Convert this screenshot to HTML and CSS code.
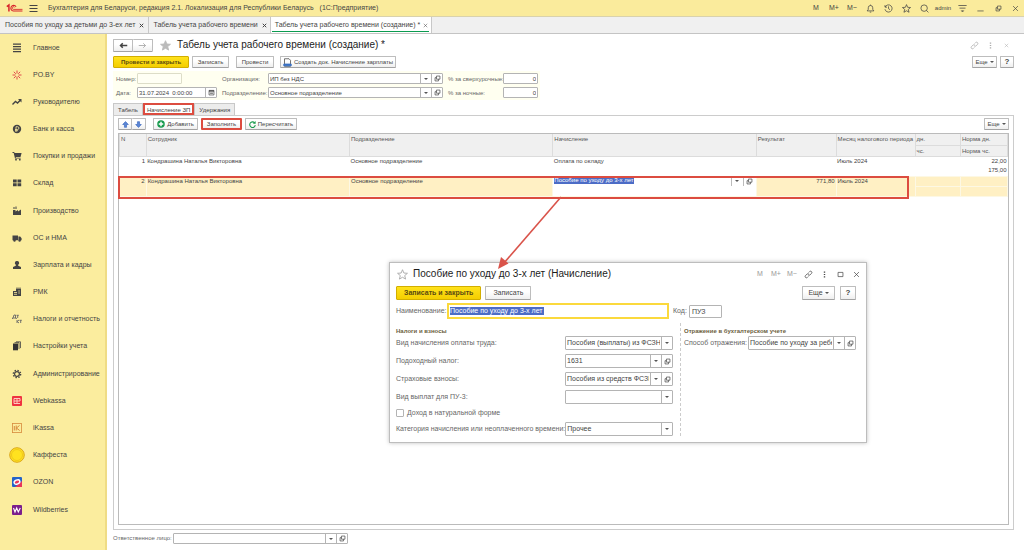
FILE: index.html
```html
<!DOCTYPE html>
<html lang="ru">
<head>
<meta charset="utf-8">
<title>Табель учета рабочего времени</title>
<link rel="stylesheet" href="styles.css">
</head>
<body>
<svg class="defs" aria-hidden="true">
  <symbol id="star" viewBox="0 0 12 12"><path d="M6 .8l1.500 3.600 3.900.3-3 2.500 1 3.800L6 9l-3.400 2 1-3.800-3-2.500 3.900-.3z"/></symbol>
  <symbol id="open" viewBox="0 0 10 10"><path d="M3.500 1.500h5v4.500h-5zM3.500 3.800h-2v4.700h5V6"/></symbol>
  <symbol id="link" viewBox="0 0 12 12"><path d="M6.200 3.400l1.500-1.500a1.800 1.800 0 0 1 2.500 2.500L8 6.500a1.800 1.800 0 0 1-2.500 0M5.800 8.600l-1.500 1.500a1.800 1.800 0 0 1-2.500-2.500L4 5.500a1.800 1.800 0 0 1 2.500 0"/></symbol>
  <symbol id="close" viewBox="0 0 10 10"><path d="M1.500 1.500l7 7M8.500 1.500l-7 7"/></symbol>
  <symbol id="dots" viewBox="0 0 10 10"><path d="M5 .8v1.600M5 4.200v1.600M5 7.600v1.600"/></symbol>
</svg>

<header class="titlebar">
  <svg class="logo" viewBox="0 0 32 18"><path d="M1.500 6.500l4-3v12" stroke-width="2.800"/><path d="M19 6.500A5.400 5.400 0 1 0 14 14.800h17" stroke-width="2"/><path d="M16.300 8a2.500 2.500 0 1 0-2.300 3.600h17" stroke-width="1.600"/></svg>
  <button class="plain" aria-label="Меню"><svg class="ic9" viewBox="0 0 9 9"><path d="M.5 1.500h8M.5 4.500h8M.5 7.500h8"/></svg></button>
  <span class="app-name">Бухгалтерия для Беларуси, редакция 2.1. Локализация для Республики Беларусь</span>
  <span>(1С:Предприятие)</span>
  <nav class="tools" aria-label="Система">
    <button>M</button><button>M+</button><button>M−</button>
    <button aria-label="Уведомления"><svg class="ic9" viewBox="0 0 12 12"><path d="M1.500 9.200h9L9 7.200V5a3 3 0 0 0-6 0v2.200zM5 10.800h2M6 2V.8"/></svg></button>
    <button aria-label="История"><svg class="ic9" viewBox="0 0 12 12"><path d="M1.600 4A4.800 4.800 0 1 1 1.300 7M1.300 1.500V4.200H4M6 3.200V6.200l2 1.300"/></svg></button>
    <button aria-label="Избранное"><svg class="ic9"><use href="#star"/></svg></button>
    <button aria-label="Поиск"><svg class="ic9" viewBox="0 0 12 12"><circle cx="5.500" cy="5.500" r="4.300"/><path d="M8.600 8.600l2.600 2.600"/></svg></button>
    <button class="user">admin</button>
    <button aria-label="Настройки"><svg class="ic9" viewBox="0 0 12 12"><path d="M.5 2h11M2 5.500h8M4.500 9h3L6 10.500z"/></svg></button>
    <button aria-label="Свернуть"><svg class="ic7" viewBox="0 0 10 10"><path d="M.5 8.500h9"/></svg></button>
    <button aria-label="Восстановить"><svg class="ic7"><use href="#open"/></svg></button>
    <button class="last" aria-label="Закрыть"><svg class="ic7"><use href="#close"/></svg></button>
  </nav>
</header>

<nav class="windows" aria-label="Открытые окна">
  <div class="win"><a href="#">Пособия по уходу за детьми до 3-ех лет</a><button class="x" aria-label="Закрыть"><svg class="ic5 bold"><use href="#close"/></svg></button></div>
  <div class="win"><a href="#">Табель учета рабочего времени</a><button class="x" aria-label="Закрыть"><svg class="ic5 bold"><use href="#close"/></svg></button></div>
  <div class="win current"><a href="#">Табель учета рабочего времени (создание) *</a><button class="x" aria-label="Закрыть"><svg class="ic5"><use href="#close"/></svg></button></div>
</nav>

<div class="body">
<nav class="sidebar" aria-label="Разделы">
  <a href="#"><svg viewBox="0 0 10 10"><path d="M1 1.200h8M1 3.700h8M1 6.200h8M1 8.700h8" stroke="#444" stroke-width="1.300"/></svg>Главное</a>
  <a href="#"><svg viewBox="0 0 10 10"><path d="M5 .5v3M5 6.500v3M.5 5h3M6.500 5h3M1.800 1.800l2 2M6.200 6.200l2 2M8.200 1.800l-2 2M3.800 6.200l-2 2" stroke="#e0484a"/></svg>PO.BY</a>
  <a href="#"><svg viewBox="0 0 10 10"><path d="M.5 7.500l3-3 2 1.500 3-3" fill="none" stroke="#444" stroke-width="1.400"/><path d="M6 2h3.500v3.500z" fill="#444"/></svg>Руководителю</a>
  <a href="#"><svg viewBox="0 0 10 10"><circle cx="5" cy="5" r="4.200" fill="#444"/><path d="M4 8V2.700h1.500a1.300 1.300 0 0 1 0 2.800H3M3 6.700h3" fill="none" stroke="#fbed9e" stroke-width=".8"/></svg>Банк и касса</a>
  <a href="#"><svg viewBox="0 0 10 10"><path d="M.5 1h1.700l.4 1h7L8.500 6H3.700l.2.8h4.800v.8H3L1.700 1.900H.5z" fill="#444"/><circle cx="4" cy="8.700" r=".9" fill="#444"/><circle cx="7.800" cy="8.700" r=".9" fill="#444"/></svg>Покупки и продажи</a>
  <a href="#"><svg viewBox="0 0 10 10"><path d="M1 1.500h3.700v3H1zM5.500 1.500h3.700v3H5.500zM1 5.300h3.700v3H1zM5.500 5.300h3.700v3H5.500z" fill="#444"/></svg>Склад</a>
  <a href="#"><svg viewBox="0 0 10 10"><path d="M1 9V4h2.500v1.500L6 4v1.500L9 3.500V9zM1.500 1h1v2h-1zM3.500 .5h1v2.500h-1z" fill="#444"/></svg>Производство</a>
  <a href="#"><svg viewBox="0 0 10 10"><path d="M.5 2.500h5.500v4.800H.5zM6.400 3.500h1.800l1.400 1.700v2.100H6.400z" fill="#444"/><circle cx="2.500" cy="7.600" r="1.200" fill="#444"/><circle cx="7.600" cy="7.600" r="1.200" fill="#444"/></svg>ОС и НМА</a>
  <a href="#"><svg viewBox="0 0 10 10"><path d="M5 1a2 2 0 0 1 1.200 3.700v1L9 7v2H1V7l2.800-1.300v-1A2 2 0 0 1 5 1z" fill="#444"/></svg>Зарплата и кадры</a>
  <a href="#"><svg viewBox="0 0 10 10"><path d="M1 4h3V2h5v7H1z" fill="#444"/><path d="M2 5.500h3M2 7.300h3M6.300 4h1.500M6.300 6h1.500" stroke="#fbed9e" stroke-width=".8"/><path d="M4 1.200h5" stroke="#444" stroke-width=".8"/></svg>РМК</a>
  <a href="#"><svg viewBox="0 0 10 10"><path d="M.5 5V4h.5l1-3h1.500v3M1 4h3.300v1M4.500 1.300h2.300M5.700 1.300V4M5 6v3M7 6L5.200 7.500 7 9M7.500 6.300h2.300M8.700 6.300V9" stroke="#666" stroke-width=".9"/></svg>Налоги и отчетность</a>
  <a href="#"><svg viewBox="0 0 10 10"><path d="M1 2.500h5v6.800H1z" fill="#333"/><path d="M2.500 1.600h4.500v6.500M4 .8h4.500v6.300" fill="none" stroke="#444" stroke-width=".8"/></svg>Настройки учета</a>
  <a href="#"><svg viewBox="0 0 10 10"><circle cx="5" cy="5" r="2.400" fill="none" stroke="#444" stroke-width="1.200"/><circle cx="5" cy="5" r="3.700" fill="none" stroke="#444" stroke-width="1.300" stroke-dasharray="1.450 1.450"/></svg>Администрирование</a>
  <a href="#"><svg viewBox="0 0 10 10"><rect width="10" height="10" rx="1" fill="#ef3340"/><path d="M2 2.500h6M2 5h6M2 7.500h6M2 2.500v5M5 2.500v5M8 2.500V5" stroke="#ffd9c9" stroke-width=".9"/></svg>Webkassa</a>
  <a href="#"><svg viewBox="0 0 10 10"><rect x=".4" y=".4" width="9.200" height="9.200" stroke="#d78a3c" stroke-width=".8"/><path d="M2.300 3v4.500M4.200 2.500v5M7.500 2.500L4.400 5l3.300 2.500" stroke="#d78a3c"/></svg>iKassa</a>
  <a href="#"><svg class="coin" viewBox="0 0 16 16"><circle cx="8" cy="8" r="7.300" fill="#ffe21f" stroke="#dba71c" stroke-width="1"/><circle cx="8" cy="8" r="5.500" fill="none" stroke="#ecc21b" stroke-width=".8"/></svg>Каффеста</a>
  <a href="#"><svg viewBox="0 0 10 10"><rect width="10" height="10" rx="1" fill="#2463c8"/><path d="M10 4v6H3z" fill="#e8375a"/><ellipse cx="5" cy="5" rx="3" ry="2" fill="#e8375a" stroke="#fff" stroke-width="1.400" transform="rotate(-25 5 5)"/></svg>OZON</a>
  <a href="#"><svg viewBox="0 0 10 10"><rect width="10" height="10" rx="1" fill="#7b1f8c"/><path d="M1.500 3l1.500 4 1.700-4 1.600 4L8.300 3" fill="none" stroke="#fff" stroke-width="1.100"/></svg>Wildberries</a>
</nav>

<main class="main">
  <div class="row head">
    <div class="joined"><button class="btn" aria-label="Назад"><svg class="ic9 bold" viewBox="0 0 12 12"><path d="M11 6H2M5 3L2 6l3 3"/></svg></button><button class="btn dim" aria-label="Вперед"><svg class="ic9" viewBox="0 0 12 12"><path d="M1 6h9M7 3l3 3-3 3"/></svg></button></div>
    <svg class="star filled"><use href="#star"/></svg>
    <h1>Табель учета рабочего времени (создание) *</h1>
    <div class="corner pale">
      <button class="plain" aria-label="Ссылка"><svg class="ic9"><use href="#link"/></svg></button>
      <button class="plain" aria-label="Еще"><svg class="ic7 bold"><use href="#dots"/></svg></button>
      <button class="plain" aria-label="Закрыть"><svg class="ic5"><use href="#close"/></svg></button>
    </div>
  </div>

  <div class="row commands">
    <button class="btn primary post">Провести и закрыть</button>
    <button class="btn save">Записать</button>
    <button class="btn do">Провести</button>
    <button class="btn make"><svg class="ic9" viewBox="0 0 12 12"><path d="M2 1h6l2 2v8H2z"/><path d="M1 8h10v2.500H1z" class="blue"/></svg>Создать док. Начисление зарплаты</button>
    <div class="end"><button class="btn more">Еще <i class="tri"></i></button><button class="btn help">?</button></div>
  </div>

  <form class="fields">
    <label for="num">Номер:</label><input class="box num" id="num">
    <label for="org">Организация:</label>
    <div class="combo"><div class="pick"><select id="org"><option>ИП без НДС</option></select><i class="drop"></i></div><button type="button" aria-label="Открыть"><svg class="ic7"><use href="#open"/></svg></button></div>
    <label for="over">% за сверхурочные:</label><input class="box right" id="over" value="0">
    <label for="date">Дата:</label>
    <div class="combo"><input id="date" value="31.07.2024  0:00:00"><button type="button" aria-label="Календарь"><svg class="ic7" viewBox="0 0 10 10"><path d="M1.500 2h7v6.500h-7zM1.500 2.500h7M1.500 3.300h7M3.500 5v2M5 5v2M6.500 5v2"/></svg></button></div>
    <label for="dep">Подразделение:</label>
    <div class="combo"><div class="pick"><select id="dep"><option>Основное подразделение</option></select><i class="drop"></i></div><button type="button" aria-label="Открыть"><svg class="ic7"><use href="#open"/></svg></button></div>
    <label for="night">% за ночные:</label><input class="box right" id="night" value="0">
  </form>

  <div class="tabs" role="tablist">
    <button role="tab">Табель</button><button role="tab" class="on marked" aria-selected="true">Начисление ЗП</button><button role="tab">Удержания</button>
  </div>

  <section class="panel">
    <div class="row bar">
      <div class="joined"><button class="btn" aria-label="Вверх"><svg class="ic7" viewBox="0 0 10 10"><path class="arrow" d="M5 .8L9 5H6.500v4h-3V5H1z"/></svg></button><button class="btn" aria-label="Вниз"><svg class="ic7" viewBox="0 0 10 10"><path class="arrow" d="M5 9.200L9 5H6.500V1h-3v4H1z"/></svg></button></div>
      <button class="btn add"><svg class="ic8" viewBox="0 0 10 10"><circle class="green" cx="5" cy="5" r="4.700"/><path class="white" d="M5 2.200v5.600M2.200 5h5.600"/></svg>Добавить</button>
      <button class="btn fill marked">Заполнить</button>
      <button class="btn recount"><svg class="ic7" viewBox="0 0 10 10"><path class="turn" d="M8 2.500A4 4 0 1 0 9 6"/><path class="green" d="M9.500 0v4h-4z"/></svg>Пересчитать</button>
      <div class="end"><button class="btn more">Еще <i class="tri"></i></button></div>
    </div>

    <div class="sheet">
      <table>
        <colgroup><col class="c-n"><col class="c-w"><col class="c-w"><col class="c-w"><col class="c-r"><col class="c-m"><col class="c-d"><col class="c-h"></colgroup>
        <thead>
          <tr><th rowspan="2">N</th><th rowspan="2">Сотрудник</th><th rowspan="2">Подразделение</th><th rowspan="2">Начисление</th><th rowspan="2">Результат</th><th rowspan="2">Месяц налогового периода</th><th>дн.</th><th>Норма дн.</th></tr>
          <tr><th>чс.</th><th>Норма чс.</th></tr>
        </thead>
        <tbody>
          <tr><td rowspan="2" class="r">1</td><td rowspan="2">Кондрашина Наталья Викторовна</td><td rowspan="2">Основное подразделение</td><td rowspan="2">Оплата по окладу</td><td rowspan="2"></td><td rowspan="2">Июль 2024</td><td></td><td class="r">22,00</td></tr>
          <tr><td></td><td class="r">175,00</td></tr>
        </tbody>
        <tbody class="active">
          <tr><td rowspan="2" class="r">2</td><td rowspan="2">Кондрашина Наталья Викторовна</td><td rowspan="2">Основное подразделение</td><td rowspan="2" class="edit"><div class="editor"><input class="chosen" aria-label="Начисление" value="Пособие по уходу до 3-х лет"><button aria-label="Выбрать"><i class="tri"></i></button><button aria-label="Открыть"><svg class="ic7"><use href="#open"/></svg></button></div></td><td rowspan="2" class="r">771,80</td><td rowspan="2">Июль 2024</td><td></td><td></td></tr>
          <tr><td></td><td></td></tr>
        </tbody>
      </table>
      <div class="frame"></div>
    </div>
  </section>

  <div class="row foot">
    <label for="resp">Ответственное лицо:</label>
    <div class="combo"><div class="pick"><select id="resp"><option></option></select><i class="drop"></i></div><button aria-label="Открыть"><svg class="ic7"><use href="#open"/></svg></button></div>
  </div>

  <section class="dialog" role="dialog" aria-labelledby="dlg-title">
    <div class="row dlg-head">
      <svg class="star"><use href="#star"/></svg>
      <h2 id="dlg-title">Пособие по уходу до 3-х лет (Начисление)</h2>
      <div class="corner">
        <button class="plain mem">M</button><button class="plain mem">M+</button><button class="plain mem">M−</button>
        <button class="plain" aria-label="Ссылка"><svg class="ic9"><use href="#link"/></svg></button>
        <button class="plain" aria-label="Еще"><svg class="ic7 bold"><use href="#dots"/></svg></button>
        <button class="plain" aria-label="Развернуть"><svg class="ic7" viewBox="0 0 10 10"><path d="M1.500 2h7v6h-7z"/></svg></button>
        <button class="plain" aria-label="Закрыть"><svg class="ic7"><use href="#close"/></svg></button>
      </div>
    </div>
    <div class="row dlg-cmd">
      <button class="btn primary">Записать и закрыть</button><button class="btn">Записать</button>
      <div class="end"><button class="btn more">Еще <i class="tri"></i></button><button class="btn help">?</button></div>
    </div>
    <div class="row name">
      <label for="name">Наименование:</label>
      <div class="focus"><input class="chosen" id="name" value="Пособие по уходу до 3-х лет"></div>
      <label for="code">Код:</label><input class="box code" id="code" value="ПУЗ">
    </div>
    <div class="cols">
      <div class="col left">
        <h3>Налоги и взносы</h3>
        <div class="line"><label for="f1">Вид начисления оплаты труда:</label><div class="combo"><div class="pick"><select id="f1"><option>Пособия (выплаты) из ФСЗН</option></select><i class="drop"></i></div></div></div>
        <div class="line"><label for="f2">Подоходный налог:</label><div class="combo"><div class="pick"><select id="f2"><option>1631</option></select><i class="drop"></i></div><button aria-label="Открыть"><svg class="ic7"><use href="#open"/></svg></button></div></div>
        <div class="line"><label for="f3">Страховые взносы:</label><div class="combo"><div class="pick"><select id="f3"><option>Пособия из средств ФСЗН</option></select><i class="drop"></i></div><button aria-label="Открыть"><svg class="ic7"><use href="#open"/></svg></button></div></div>
        <div class="line"><label for="f4">Вид выплат для ПУ-3:</label><div class="combo"><div class="pick"><select id="f4"><option></option></select><i class="drop"></i></div></div></div>
        <div class="line check"><input type="checkbox" id="f5"><label for="f5">Доход в натуральной форме</label></div>
        <div class="line"><label for="f6">Категория начисления или неоплаченного времени:</label><div class="combo"><div class="pick"><select id="f6"><option>Прочее</option></select><i class="drop"></i></div></div></div>
      </div>
      <div class="col side">
        <h3>Отражение в бухгалтерском учете</h3>
        <div class="line"><label for="f7">Способ отражения:</label><div class="combo"><div class="pick"><select id="f7"><option>Пособие по уходу за ребенком</option></select><i class="drop"></i></div><button aria-label="Открыть"><svg class="ic7"><use href="#open"/></svg></button></div></div>
      </div>
    </div>
  </section>
  <svg class="pointer" viewBox="0 0 70 76" aria-hidden="true"><path d="M65 1L8 67" stroke="#d9534a" stroke-width="1.600"/><path d="M2 73l3-12 7.500 6.500z" fill="#d9534a"/></svg>
</main>
</div>
</body>
</html>
```
FILE: styles.css
```css
* { box-sizing: border-box; }
html, body { height: 100%; }
body {
  margin: 0;
  display: flex;
  flex-direction: column;
  background: #fff;
  color: #444;
  font: 7px/10px "Liberation Sans", Arial, sans-serif;
  overflow: hidden;
}
button, input, select { font: inherit; color: inherit; margin: 0; padding: 0; min-width: 0; }
button { cursor: pointer; white-space: nowrap; }
a { color: inherit; text-decoration: none; }
h1, h2, h3 { margin: 0; white-space: nowrap; }
label { white-space: nowrap; color: #666; }
svg { fill: none; stroke: currentColor; flex: none; display: block; }
.defs { position: absolute; width: 0; height: 0; }
.ic5 { width: 5px; height: 5px; }
.ic7 { width: 7px; height: 7px; }
.ic8 { width: 8px; height: 8px; }
.ic9 { width: 9px; height: 9px; }
.bold { stroke-width: 2; }
.plain { border: 0; background: none; display: flex; align-items: center; justify-content: center; }
.row { display: flex; align-items: center; flex: none; }

/* title bar */
.titlebar {
  flex: none;
  height: 17px;
  display: flex;
  align-items: center;
  background: #faeb9c;
  border-bottom: 1px solid #d9d2ad;
  padding-left: 6px;
  white-space: nowrap;
}
.logo { width: 17px; height: 10px; margin-right: 6px; color: #d8232a; }
.titlebar .plain { width: 9px; margin-right: 10px; }
.app-name { margin-right: 6px; }
.tools { margin-left: auto; display: flex; }
.tools button { width: 18px; border: 0; background: none; display: flex; align-items: center; justify-content: center; }
.tools .user { width: 20px; font-size: 6px; }
.tools .last { width: 17px; }

/* open windows */
.windows { flex: none; height: 17px; display: flex; background: #f0f0f0; border-bottom: 1px solid #c4c4c4; }
.win { display: flex; align-items: center; gap: 4px; padding: 0 3px 0 4px; border-right: 1px solid #c8c8c8; white-space: nowrap; }
.win .x { border: 0; background: none; }
.win:first-child { padding: 0 4px 0 5px; }
.win.current { gap: 3px; background: linear-gradient(#0b9b50, #0b9b50) 1px 14px / calc(100% - 3px) 1px no-repeat #fff; }

.body { flex: 1; display: flex; min-height: 0; }

/* sections */
.sidebar {
  flex: none;
  width: 107px;
  display: flex;
  flex-direction: column;
  padding-bottom: 27px;
  background: #fbed9e;
  border-right: 2px solid #efdc85;
}
.sidebar a { flex: 1; display: grid; grid-template-columns: 33px 1fr; align-items: center; white-space: nowrap; }
.sidebar svg { width: 10px; height: 10px; margin-left: 12px; stroke: none; }
.sidebar svg.coin { width: 16px; height: 16px; margin-left: 9px; }

/* document */
.main { position: relative; flex: 1; min-width: 0; display: flex; flex-direction: column; padding: 4px 10px 7px 6px; }
.btn {
  height: 12px;
  display: flex;
  align-items: center;
  justify-content: center;
  gap: 2px;
  border: 1px solid #bdbdbd;
  border-bottom-color: #a3a3a3;
  border-radius: 1px;
  background: linear-gradient(#fff 40%, #efefef);
  font-size: 6px;
}
.btn.primary { background: linear-gradient(#ffe21c, #f4ce00); border-color: #d2ae00; font-weight: bold; color: #5a4a10; }
.btn.more { width: 25px; }
.btn.help { width: 14px; font-weight: bold; font-size: 8px; }
.btn.dim { color: #999; }
.tri { border: 2px solid transparent; border-top-color: #555; border-bottom: 0; }
.joined { display: flex; }
.joined .btn + .btn { border-left: 0; }
.end { margin-left: auto; display: flex; gap: 3px; }
.corner { margin-left: auto; display: flex; }
.corner .plain { width: 16px; }
.pale { color: #aaa; }
.head { height: 14px; }
.head .btn { width: 20px; height: 13px; }
.star { width: 11px; height: 11px; color: #aaa; }
.head .star { margin: 0 6px 0 7px; }
.star.filled { fill: #bbb; color: #bbb; }
h1, h2 { font-size: 10px; line-height: 12px; font-weight: normal; color: #1c1c1c; }
.commands { height: 12px; margin-top: 4px; }
.post { width: 76px; margin-right: 3px; }
.save { width: 37px; margin-right: 7px; }
.do { width: 38px; margin-right: 6px; }
.make { width: 116px; }
.make .blue { fill: #3b72c4; stroke: #3b72c4; }

.fields {
  flex: none;
  align-self: flex-start;
  display: grid;
  grid-template-columns: 21px 80px 51px 175px 60px 35px;
  grid-auto-rows: 11px;
  row-gap: 3px;
  align-items: center;
  padding: 2px 2px 2px 3px;
  margin-top: 3px;
  background: #fffff0;
  font-size: 6px;
}
.fields label { padding-left: 5px; }
.fields label[for="num"], .fields label[for="date"] { padding-left: 0; }
.box, .combo { height: 11px; border: 1px solid #b4b4b4; border-radius: 1px; background: #fff; }
.box { padding: 0 1px; width: 100%; }
.box.num { width: 45px; background: #fffff4; border-color: #ddddc8; }
.right { text-align: right; }
.combo { display: flex; min-width: 0; }
.combo > input { flex: 1; border: 0; padding: 0 1px; white-space: pre; background: none; }
.combo > button { width: 11px; flex: none; border: 0; border-left: 1px solid #b4b4b4; background: none; display: flex; align-items: center; justify-content: center; }
.pick { flex: 1; min-width: 0; display: grid; grid-template-columns: 1fr 11px; }
.pick select { grid-area: 1 / 1 / 2 / 3; appearance: none; border: 0; background: none; padding: 0 12px 0 1px; width: 100%; overflow: hidden; }
.drop { grid-area: 1 / 2; border-left: 1px solid #b4b4b4; display: grid; place-items: center; pointer-events: none; }
.drop::after { content: ""; border: 2px solid transparent; border-top-color: #555; border-bottom: 0; }

.tabs { flex: none; display: flex; margin-top: 3px; height: 12px; font-size: 6px; }
.tabs button { border: 1px solid #c8c8c8; border-bottom: 0; background: #ececec; padding: 0 4px; }
.tabs .on { background: #fff; padding: 0 2px; }
.tabs .marked, .btn.marked { border: 2px solid #dc4c40; }
.panel { flex: 1; min-height: 0; display: flex; flex-direction: column; border: 1px solid #ccc; padding: 2px 4px 4px; }
.bar { height: 12px; }
.bar .joined .btn { width: 14px; }
.arrow { fill: #5b86d6; stroke: #3f6bc0; stroke-width: 1; }
.green { fill: #179a4c; stroke: none; }
.white { stroke: #fff; stroke-width: 1.8; }
.turn { stroke: #179a4c; stroke-width: 1.6; }
.add { width: 45px; margin: 0 3px 0 7px; }
.fill { width: 41px; }
.recount { width: 52px; margin-left: 3px; }

.sheet { position: relative; flex: 1; min-height: 0; margin-top: 3px; border: 1px solid #bbb; font-size: 6px; }
table { width: 100%; table-layout: fixed; border-collapse: collapse; }
.c-n { width: 3%; }
.c-w { width: 22.9%; }
.c-r { width: 9%; }
.c-m { width: 8.9%; }
.c-d { width: 5.1%; }
.c-h { width: 5.3%; }
th, td { height: 10px; padding: 0 2px; line-height: 9px; vertical-align: top; text-align: left; font-weight: normal; white-space: nowrap; }
th { height: 11px; padding: 1px 1px 0; background: #f0f0f0; color: #555; border: 1px solid #dcdcdc; border-top: 0; }
td { padding: 0 1px; }
.r { text-align: right; }
tbody.active td { background: #fff0c4; border: 1px solid #fdf8e4; }
tbody.active .edit { background: #fff; }
.editor { display: flex; height: 9px; }
.chosen { border: 0; border-radius: 0; background: #4c6cc6; color: #fff; height: 7px; line-height: 7px; width: 80px; }
.editor button { width: 12px; border: 0; border-left: 1px solid #bbb; background: none; display: flex; align-items: center; justify-content: center; }
.editor .chosen + button { margin-left: auto; }
/* highlight drawn over the selected row */
.frame { position: absolute; left: -1px; top: 42px; width: 89%; height: 23px; border: 2px solid #dc4c40; }

.foot { margin-top: 3px; height: 10px; font-size: 6px; }
.foot label { width: 60px; }
.foot .combo { width: 175px; }

/* floating window */
.dialog {
  position: absolute;
  left: 282px;
  top: 228px;
  width: 478px;
  padding: 4px 10px 6px 6px;
  background: #fff;
  border: 1px solid #bdbdbd;
  box-shadow: 0 0 4px rgba(0, 0, 0, .25);
}
.dlg-head { height: 14px; }
.dlg-head h2 { margin-left: 5px; }
.dlg-head .star { margin-left: 1px; }
.dlg-head .corner { margin-right: -8px; }
.dlg-head .mem { color: #999; }
.dlg-cmd { margin-top: 5px; gap: 4px; }
.dialog .btn { height: 14px; font-size: 7px; padding: 0 7px; }
.dialog .more { width: 33px; padding: 0; }
.dialog .end { gap: 5px; }
.dialog .help { width: 16px; padding: 0; font-size: 8px; }
.name { margin-top: 3px; }
.name label { width: 51px; }
.focus { width: 222px; height: 16px; border: 2px solid #fbd93c; padding: 2px 1px; display: flex; }
.focus .chosen { width: 94px; height: 8px; line-height: 8px; }
.focus + label { width: 16px; margin-left: 4px; }
.code { width: 33px; height: 13px; padding: 0 2px; }
.cols { display: flex; margin-top: 4px; }
.col.left { width: 285px; padding-right: 7px; border-right: 1px dashed #ccc; }
.side { flex: 1; padding-left: 3px; }
h3 { font-size: 6px; line-height: 10px; padding-top: 3px; color: #6b6040; }
.line { display: flex; align-items: center; height: 14px; margin-bottom: 4px; }
.line .combo { margin-left: auto; width: 108px; height: 14px; flex: none; }
.line:last-child { margin-bottom: 0; }
.line.check { height: 10px; gap: 3px; }
.check input { appearance: none; width: 8px; height: 8px; border: 1px solid #b4b4b4; border-radius: 1px; background: #fff; }

.pointer { position: absolute; left: 389px; top: 162px; width: 70px; height: 76px; stroke: none; }
```
